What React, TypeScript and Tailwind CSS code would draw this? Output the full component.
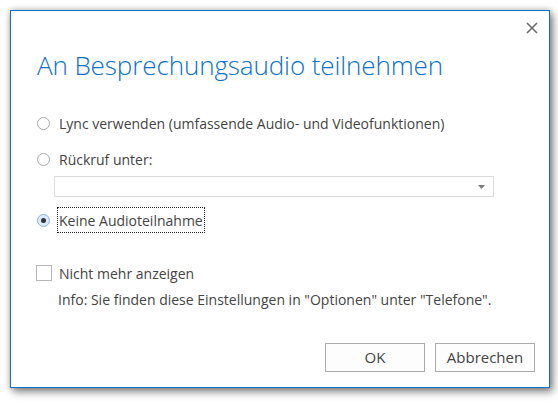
// App.tsx
const font = { fontFamily: '"Open Sans", "Noto Sans", sans-serif' };

interface RadioProps {
  checked?: boolean;
}

const Radio: React.FC<RadioProps> = ({ checked }) => (
  <span
    className={`flex items-center justify-center w-[13px] h-[13px] rounded-full border shrink-0 ${
      checked ? "border-[#8cb6e0] bg-[#dceaf7]" : "border-[#a8a8a8] bg-white"
    }`}
  >
    {checked && <span className="w-[5px] h-[5px] rounded-full bg-[#333]" />}
  </span>
);

const App: React.FC = () => {
  return (
    <div className="w-[558px] h-[405px] bg-white pl-[10px] pt-[10px]" style={font}>
      <div className="w-[540px] h-[378px] bg-white border border-[#1a6fc4] shadow-[0_0_6px_rgba(0,0,0,0.25),3px_4px_8px_rgba(0,0,0,0.45)] flex flex-col pl-[26px] pr-[14px]">
        {/* close */}
        <div className="flex justify-end h-[40px] pt-[11px]">
          <svg width="12" height="12" viewBox="0 0 12 12" className="mr-[-3px]">
            <path d="M1 1 L11 11 M11 1 L1 11" stroke="#6b6b6b" strokeWidth="1.6" />
          </svg>
        </div>

        <h1 className="text-[26px] leading-[28px] font-light text-[#0a72c8] tracking-[-0.1px]">
          An Besprechungsaudio teilnehmen
        </h1>

        <div className="flex flex-col text-[14px] text-[#444] mt-[34px]">
          <div className="flex items-center gap-[9px] h-[20px]">
            <Radio />
            <span>Lync verwenden (umfassende Audio- und Videofunktionen)</span>
          </div>

          <div className="flex items-center gap-[9px] h-[20px] mt-[16px]">
            <Radio />
            <span>Rückruf unter:</span>
          </div>

          <div className="ml-[17px] mt-[7px] w-[440px] h-[21px] border border-[#dcdcdc] flex items-center justify-end pr-[8px]">
            <svg width="7" height="4" viewBox="0 0 7 4">
              <path d="M0 0 H7 L3.5 4 Z" fill="#7a7a7a" />
            </svg>
          </div>

          <div className="flex items-center gap-[7px] h-[26px] mt-[10px]">
            <Radio checked />
            <span className="h-[26px] flex items-center border border-dotted border-[#222] px-[1px]">
              Keine Audioteilnahme
            </span>
          </div>

          <div className="flex items-center gap-[7px] h-[20px] mt-[30px] -ml-[1px]">
            <span className="w-[16px] h-[16px] border border-[#b5b5b5] bg-white shrink-0" />
            <span>Nicht mehr anzeigen</span>
          </div>

          <div className="h-[20px] mt-[6px] ml-[21px] flex items-center">
            Info: Sie finden diese Einstellungen in "Optionen" unter "Telefone".
          </div>
        </div>

        <div className="flex justify-end gap-[10px] mt-[34px] text-[15px] text-[#444]">
          <button className="w-[100px] h-[29px] border border-[#ababab] bg-[#fdfdfd]">OK</button>
          <button className="w-[100px] h-[29px] border border-[#ababab] bg-[#fdfdfd]">Abbrechen</button>
        </div>
      </div>
    </div>
  );
};

export default App;
